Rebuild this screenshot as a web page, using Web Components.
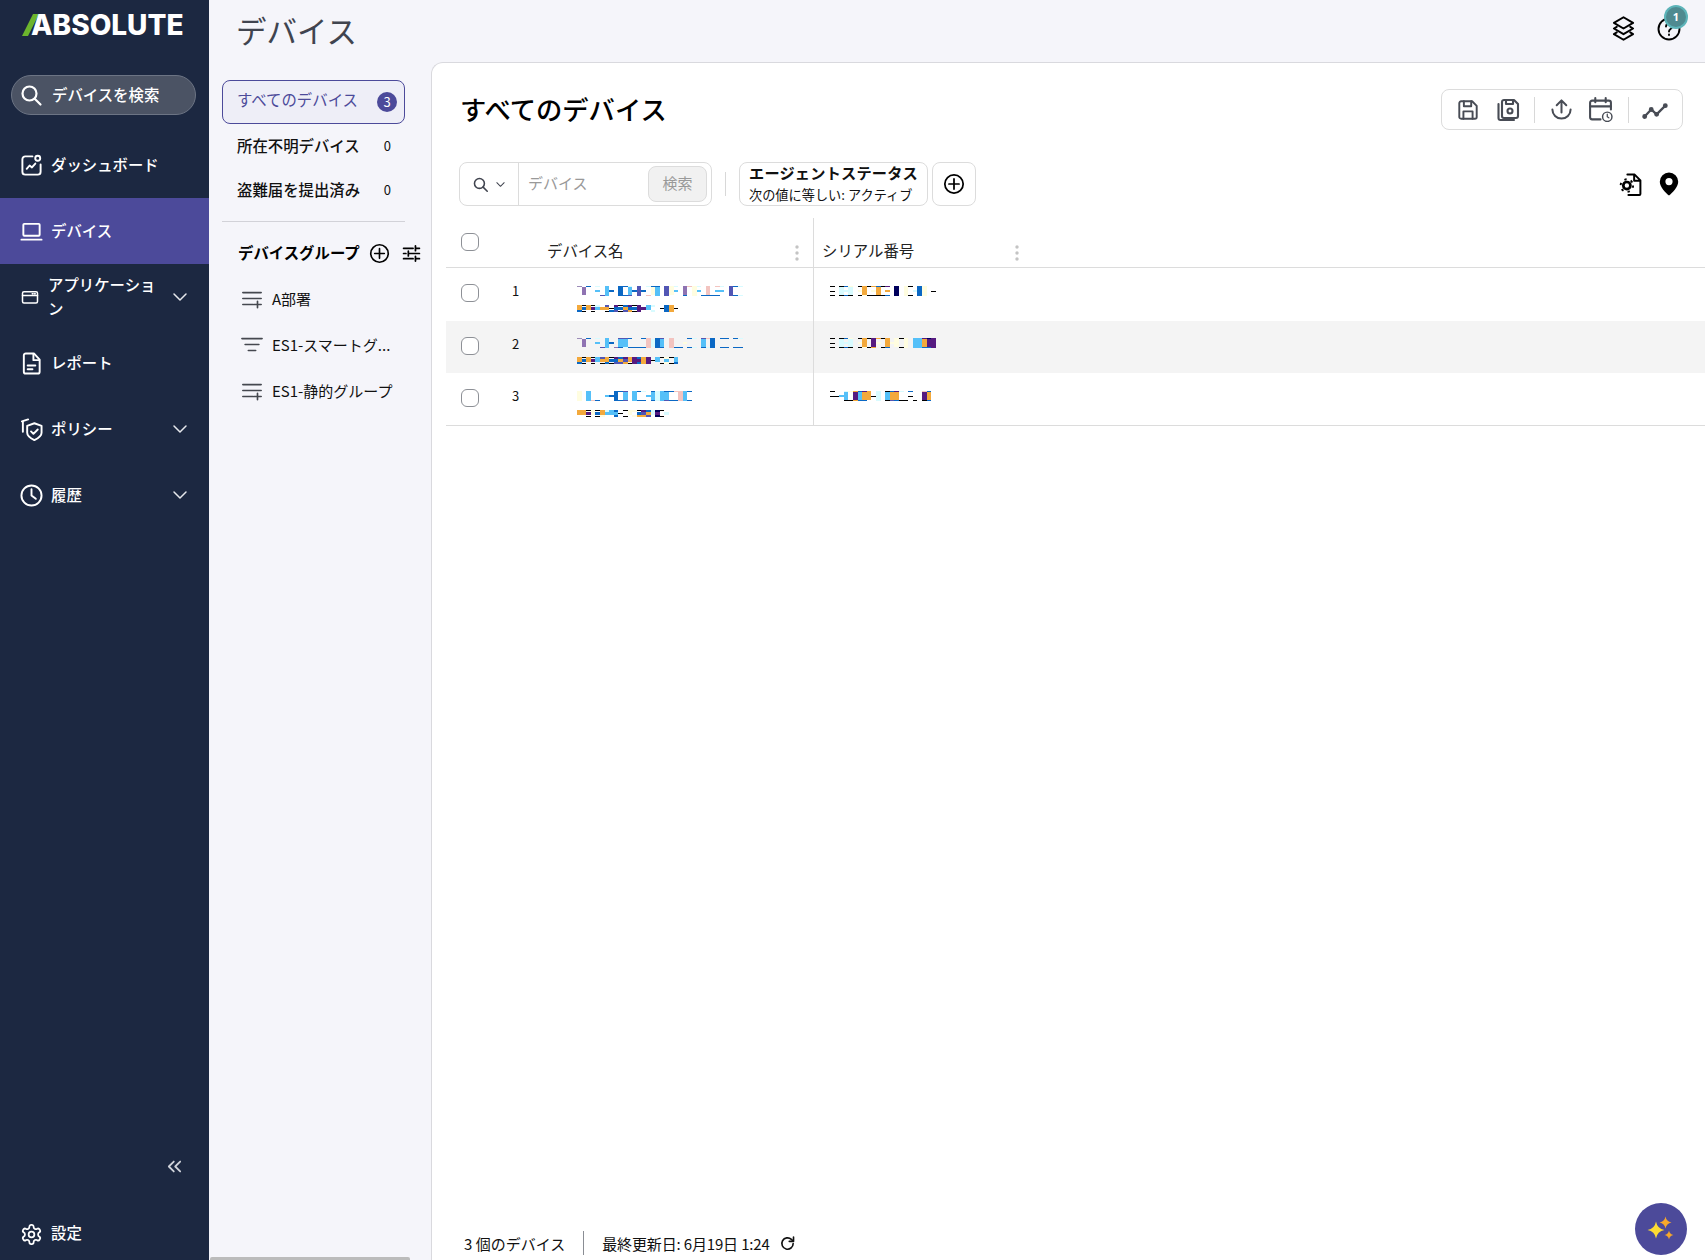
<!DOCTYPE html>
<html lang="ja">
<head>
<meta charset="utf-8">
<title>デバイス</title>
<style>
  html, body { margin: 0; height: 100%; overflow: hidden; }
  body { font-family: "Noto Sans CJK JP", "Noto Sans", sans-serif; font-size: 15px; color: #111; background: #f5f5fa; }
</style>
</head>
<body>
<abs-app></abs-app>

<script>
const star = (x, y, r) => `M${x} ${y - r}Q${x + r * .15} ${y - r * .15} ${x + r} ${y}Q${x + r * .15} ${y + r * .15} ${x} ${y + r}Q${x - r * .15} ${y + r * .15} ${x - r} ${y}Q${x - r * .15} ${y - r * .15} ${x} ${y - r}z`;

const icons = {
  search: '<circle cx="10.5" cy="10.5" r="7"/><path d="M15.7 15.7 21.5 21.5"/>',
  dashboard: '<path d="M13 2.5H5.5a3 3 0 0 0-3 3v13a3 3 0 0 0 3 3h13a3 3 0 0 0 3-3V11"/><circle cx="18.5" cy="4.5" r="2.6"/><path d="M7 15.5l3-3.5 2.5 2 3.5-4"/>',
  laptop: '<rect x="3.5" y="4" width="17" height="12.5" rx="1"/><path d="M1.5 20.5h21"/>',
  app: '<rect x="2" y="5" width="20" height="15" rx="2"/><path d="M2 10h20M15 7.5h1M18 7.5h1"/>',
  report: '<path d="M6 1.5h8.5l6 6.5v12.5a2 2 0 0 1-2 2H6a2 2 0 0 1-2-2v-17a2 2 0 0 1 2-2z"/><path d="M14 2v6.500h6M8 14h8M8 18h5"/>',
  policy: '<path d="M15 5.500l7.500 2.800v7c0 3-3 5.500-7.500 7.700-4.500-2.200-7.500-4.700-7.500-7.700v-7z"/><path d="M11.500 14l2.500 2.500 4.500-4.500"/><path d="M8.500 1.500 2 3.500l1 .8v10"/>',
  clock: '<circle cx="12" cy="12" r="10.500"/><path d="M12 5.500V12l4.500 3.500"/>',
  chevron: '<path d="M4 8l8 8 8-8"/>',
  collapse: '<path d="M11 5l-7 7 7 7M20 5l-7 7 7 7"/>',
  gear: '<path d="M12.220 2h-.44a2 2 0 0 0-2 2v.18a2 2 0 0 1-1 1.730l-.43.25a2 2 0 0 1-2 0l-.15-.08a2 2 0 0 0-2.730.73l-.22.38a2 2 0 0 0 .73 2.730l.15.1a2 2 0 0 1 1 1.720v.51a2 2 0 0 1-1 1.740l-.15.09a2 2 0 0 0-.73 2.730l.22.38a2 2 0 0 0 2.730.73l.15-.08a2 2 0 0 1 2 0l.43.25a2 2 0 0 1 1 1.730V20a2 2 0 0 0 2 2h.44a2 2 0 0 0 2-2v-.18a2 2 0 0 1 1-1.730l.43-.25a2 2 0 0 1 2 0l.15.08a2 2 0 0 0 2.730-.73l.22-.39a2 2 0 0 0-.73-2.730l-.15-.08a2 2 0 0 1-1-1.740v-.5a2 2 0 0 1 1-1.740l.15-.09a2 2 0 0 0 .73-2.730l-.22-.38a2 2 0 0 0-2.730-.73l-.15.08a2 2 0 0 1-2 0l-.43-.25a2 2 0 0 1-1-1.730V4a2 2 0 0 0-2-2z"/><circle cx="12" cy="12" r="3"/>',
  plus: '<circle cx="12" cy="12" r="10"/><path d="M12 6.500v11M6.500 12h11"/>',
  sliders: '<path d="M2 5.500h12M17 2.500v6M17 5.500h5M2 12h3M8 9v6M8 12h14M2 18.500h12M17 15.500v6M17 18.500h5"/>',
  groupAdd: '<path d="M2 5h20M2 11.500h20M2 18h11M14 18h8M18 14.500v7"/>',
  groupFilter: '<path d="M1 5h22M4.500 11.500h15M8 18h8"/>',
  layers: '<path d="M12 2l8.500 5L12 12 3.500 7z"/><path d="M6 10.500 3.500 12 12 17l8.500-5-2.500-1.500"/><path d="M6 15.500 3.500 17 12 22l8.500-5-2.500-1.500"/>',
  help: '<circle cx="12" cy="12" r="10.500"/><path d="M9 9.500a3 3 0 1 1 4.600 2.500c-1 .7-1.600 1.200-1.600 2.500"/><path d="M12 17.500v.5"/>',
  save: '<path d="M4.500 2.500h12l5 5v12a2 2 0 0 1-2 2h-15a2 2 0 0 1-2-2v-15a2 2 0 0 1 2-2z"/><path d="M7 21.500v-8h10v8M7.500 2.500v5.500h8V2.500"/>',
  saveStack: '<path d="M8 2h10l4 4v12a2 2 0 0 1-2 2H8a2 2 0 0 1-2-2V4a2 2 0 0 1 2-2z"/><path d="M10 2v4h7V2"/><circle cx="14" cy="13" r="2.500"/><path d="M2.500 6v14a2 2 0 0 0 2 2H18"/>',
  upload: '<path d="M12 15V2.500M7 7.500l5-5 5 5M2.500 12a9.500 9.500 0 0 0 19 0"/>',
  calClock: '<path d="M12 21.500H4a2 2 0 0 1-2-2v-14a2 2 0 0 1 2-2h16a2 2 0 0 1 2 2V12"/><path d="M2 9h20M7 1v4M17 1v4"/><circle cx="18.500" cy="19" r="4.500" fill="#fff" stroke-width="1.400"/><path d="M18.500 16.500V19l1.500 1" stroke-width="1.200"/>',
  trend: '<path d="M2 18.500l6.500-7 5 4.500 8.500-8.500"/><circle cx="2.500" cy="18" r="1.200" fill="currentColor"/><circle cx="8.500" cy="11.500" r="1.200" fill="currentColor"/><circle cx="13.500" cy="16" r="1.200" fill="currentColor"/><circle cx="21.500" cy="8" r="1.200" fill="currentColor"/>',
  docGear: '<path d="M9 2.500h7l5.500 5.500v13a1 1 0 0 1-1 1H10M15.500 3v5.500H21"/><circle cx="8.500" cy="13" r="3.400" stroke-width="2.600"/><circle cx="8.500" cy="13" r="6" stroke-linecap="butt" stroke-dasharray="2.200 4.080" stroke-width="1.800"/>',
  refresh: '<path d="M20 12a8 8 0 1 1-2.500-5.800L20 8.500"/><path d="M20.500 3v6h-6" fill="none"/>'
};

const icon = (name, size, sw = 1.8) => `<svg width="${size}" height="${size}" viewBox="0 0 24 24" fill="none" stroke="currentColor" stroke-width="${sw}" stroke-linecap="round" stroke-linejoin="round" aria-hidden="true">${icons[name]}</svg>`;

class AbsApp extends HTMLElement {
  connectedCallback() {
    this.attachShadow({ mode: 'open' });
    this.shadowRoot.innerHTML = `
      <style>
        :host { display: flex; height: 100vh; position: relative; overflow: hidden; }
        .right { flex: 1; min-width: 0; display: flex; flex-direction: column; }
        .body { flex: 1; min-height: 0; display: flex; }
      </style>
      <abs-sidenav></abs-sidenav>
      <div class="right">
        <abs-topbar></abs-topbar>
        <div class="body">
          <abs-subpanel></abs-subpanel>
          <abs-devices></abs-devices>
        </div>
      </div>
    `;
  }
}

class AbsSidenav extends HTMLElement {
  connectedCallback() {
    this.attachShadow({ mode: 'open' });
    this.shadowRoot.innerHTML = `
      <style>
        :host { display: flex; flex-direction: column; width: 209px; flex: none; background: #1c2841; color: #fff; font-weight: 500; font-size: 15.400px; }
        .logo { height: 75px; box-sizing: border-box; padding: 11px 0 0 22px; display: flex; align-items: flex-start; }
        .logo svg { margin-top: 3px; flex: none; }
        .logo span { font: 800 28px/28px Inter, "Noto Sans", sans-serif; margin-left: -8px; }
        .search { height: 40px; margin: 0 13px 0 11px; box-sizing: border-box; border-radius: 20px; background: #4b5364; border: 1px solid #6c7484; display: flex; align-items: center; padding-left: 7px; gap: 9px; }
        .search span { padding-bottom: 2px; }
        .spacer-a { height: 17px; }
        .grow { flex: 1; }
        .collapse { display: flex; justify-content: flex-end; padding-right: 26px; color: #d0d3da; margin-bottom: 33px; }
        .settings { height: 52px; display: flex; align-items: center; padding-left: 20px; gap: 8px; }
        .settings span { padding-bottom: 5px; }
        nav { display: flex; flex-direction: column; }
      </style>
      <div class="logo">
        <svg width="17" height="22" viewBox="0 0 17 22"><polygon points="11,0 17,0 6,22 0,22" fill="#6cb52d"/></svg>
        <span>ABSOLUTE</span>
      </div>
      <div class="search">${icon('search', 24, 2.2)}<span>デバイスを検索</span></div>
      <div class="spacer-a"></div>
      <nav>
        <abs-navitem icon="dashboard">ダッシュボード</abs-navitem>
        <abs-navitem icon="laptop" active>デバイス</abs-navitem>
        <abs-navitem icon="app" small more>アプリケーション</abs-navitem>
        <abs-navitem icon="report">レポート</abs-navitem>
        <abs-navitem icon="policy" more>ポリシー</abs-navitem>
        <abs-navitem icon="clock" more>履歴</abs-navitem>
      </nav>
      <div class="grow"></div>
      <div class="collapse">${icon('collapse', 17, 2.5)}</div>
      <div class="settings">${icon('gear', 23, 1.8)}<span>設定</span></div>
    `;
  }
}

class AbsNavitem extends HTMLElement {
  connectedCallback() {
    const small = this.hasAttribute('small');
    this.attachShadow({ mode: 'open' });
    this.shadowRoot.innerHTML = `
      <style>
        :host { display: flex; align-items: center; height: 66px; box-sizing: border-box; padding-left: 20px; padding-right: 20px; line-height: 24px; }
        :host([active]) { background: #4c4a9a; }
        :host([small]) svg.lead { margin-left: 1px; }
        .txt { flex: 1; min-width: 0; margin-left: ${small ? 9 : 8}px; padding-bottom: 3px; }
        .chev { display: flex; color: #e6e8ec; margin-left: 6px; }
      </style>
      ${icon(this.getAttribute('icon'), small ? 18 : 23, 2).replace('<svg', '<svg class="lead"')}
      <span class="txt"><slot></slot></span>
      ${this.hasAttribute('more') ? `<span class="chev">${icon('chevron', 18, 2)}</span>` : ''}
    `;
  }
}

class AbsTopbar extends HTMLElement {
  connectedCallback() {
    this.attachShadow({ mode: 'open' });
    this.shadowRoot.innerHTML = `
      <style>
        :host { display: flex; align-items: center; height: 62px; flex: none; box-sizing: border-box; padding: 0 24px 0 27px; color: #000; }
        h1 { margin: 0 0 2px; font-size: 30.500px; font-weight: 400; color: #40444f; flex: 1; line-height: 44px; }
        .help { position: relative; display: flex; margin-left: 20px; margin-bottom: 4px; }
        .layers { display: flex; margin-bottom: 6px; }
        .badge { position: absolute; left: 9px; top: -10px; width: 20px; height: 20px; border-radius: 50%; background: #4f8a90; box-shadow: 0 0 0 2px #5db4b9; color: #fff; font: 700 11px/20px "Noto Sans", sans-serif; text-align: center; }
      </style>
      <h1>デバイス</h1>
      <span class="layers">${icon('layers', 27, 1.8)}</span>
      <span class="help">${icon('help', 24, 1.9)}<span class="badge">1</span></span>
    `;
  }
}

class AbsSubpanel extends HTMLElement {
  connectedCallback() {
    this.attachShadow({ mode: 'open' });
    this.shadowRoot.innerHTML = `
      <style>
        :host { display: block; width: 222px; flex: none; box-sizing: border-box; padding: 18px 0 0 13px; position: relative; font-weight: 500; font-size: 15.400px; }
        .item { width: 183px; height: 44px; box-sizing: border-box; display: flex; align-items: center; justify-content: space-between; padding: 0 14px 0 15px; color: #111; }
        .item .lbl { padding-bottom: 3px; }
        .sel { border: 1px solid #4c4a9a; border-radius: 8px; background: #eeeef7; color: #4c4a9a; padding: 0 7px 0 14px; font-weight: 400; }
        .sel .lbl { padding-bottom: 6px; }
        .badge { width: 20px; height: 20px; border-radius: 50%; background: #4c4a9a; color: #fff; font-size: 13px; line-height: 20px; text-align: center; }
        .count { font-size: 13px; font-weight: 400; padding-bottom: 1px; }
        hr { width: 183px; height: 1px; border: 0; background: #d2d2d8; margin: 9px 0 10px; }
        .head { height: 44px; box-sizing: border-box; padding: 0 0 2px 16px; display: flex; align-items: center; font-weight: 700; color: #000; }
        .head .txt { width: 131px; flex: none; padding-bottom: 3px; white-space: nowrap; }
        .head svg { margin-right: 12px; flex: none; }
        .group { display: flex; align-items: center; height: 46px; padding-left: 19px; gap: 9px; color: #111; font-weight: 400; font-size: 15px; }
        .group svg { flex: none; color: #45484f; }
        .group span { white-space: nowrap; padding-bottom: 2px; }
        .scroll { position: absolute; left: 1px; bottom: 0; width: 200px; height: 3px; background: #bbb; border-radius: 2px 2px 0 0; }
      </style>
      <div class="item sel"><span class="lbl">すべてのデバイス</span><span class="badge">3</span></div>
      <div class="item"><span class="lbl">所在不明デバイス</span><span class="count">0</span></div>
      <div class="item"><span class="lbl">盗難届を提出済み</span><span class="count">0</span></div>
      <hr>
      <div class="head"><span class="txt">デバイスグループ</span>${icon('plus', 21, 1.9)}${icon('sliders', 19, 2.2)}</div>
      <div class="groups">
        <div class="group">${icon('groupAdd', 22, 1.8)}<span>A部署</span></div>
        <div class="group">${icon('groupFilter', 22, 1.8)}<span>ES1-スマートグ...</span></div>
        <div class="group">${icon('groupAdd', 22, 1.8)}<span>ES1-静的グループ</span></div>
      </div>
      <div class="scroll"></div>
    `;
  }
}

class AbsDevices extends HTMLElement {
  connectedCallback() {
    this.attachShadow({ mode: 'open' });
    this.shadowRoot.innerHTML = `
      <style>
        :host { flex: 1; min-width: 0; display: flex; flex-direction: column; background: #fff; border: 1px solid #d9d9de; border-width: 1px 0 0 1px; border-top-left-radius: 12px; position: relative; }
        .top { display: flex; align-items: center; justify-content: space-between; height: 41px; margin: 26px 22px 0 28px; }
        h2 { margin: 0 0 2px; font-size: 26.300px; font-weight: 500; color: #000; }
        .tools { display: flex; align-items: center; height: 41px; box-sizing: border-box; border: 1px solid #dcdcdc; border-radius: 8px; padding: 0 14px 0 15px; color: #484c55; }
        .tools svg { display: block; }
        .tools .sep { width: 1px; height: 26px; background: #d8d8d8; }
        .filters { display: flex; align-items: stretch; height: 44px; margin: 32px 24px 0 27px; }
        .box { border: 1px solid #dcdcdc; border-radius: 8px; box-sizing: border-box; }
        .find { display: flex; width: 253px; align-items: center; }
        .find .kind { width: 59px; align-self: stretch; border-right: 1px solid #dcdcdc; box-sizing: border-box; display: flex; align-items: center; justify-content: center; gap: 6px; color: #40444f; }
        .find .ph { flex: 1; padding: 0 0 3px 9px; color: #999; }
        .find .btn { width: 59px; height: 36px; box-sizing: border-box; margin-right: 4px; border: 1px solid #dcdcdc; border-radius: 8px; background: #f1f1f1; color: #999; text-align: center; line-height: 31px; }
        .vsep { width: 1px; height: 24px; background: #d8d8d8; margin: 10px 13px 0 13px; }
        .chip { width: 189px; padding: 0 0 0 9px; }
        .chip b { display: block; font-size: 15.200px; line-height: 20px; margin-top: -1px; letter-spacing: .2px; }
        .chip span { display: block; font-size: 13.200px; line-height: 20px; margin-top: 3px; }
        .add { width: 44px; margin-left: 4px; display: flex; align-items: center; justify-content: center; color: #000; }
        .right { margin-left: auto; display: flex; align-items: center; gap: 14px; color: #000; }
        .table { margin: 12px 0 0 14px; }
        .footer { margin-top: auto; display: flex; align-items: center; height: 34px; margin-bottom: 0; padding: 0 0 0 32px; color: #111; }
        .footer .sep { width: 1px; height: 24px; background: #8a8d94; margin: 0 18px 0 18px; }
        .footer .date { letter-spacing: -.15px; }
        .footer svg { margin-left: 9px; color: #111; }
        .fab { position: absolute; right: 18px; bottom: 5px; width: 52px; height: 52px; border-radius: 50%; background: #4c4a9a; display: flex; align-items: center; justify-content: center; }
      </style>
      <div class="top">
        <h2>すべてのデバイス</h2>
        <div class="tools">
          ${icon('save', 22, 2.1)}<span style="width:17px"></span>
          ${icon('saveStack', 24, 2.1)}<span style="width:14px"></span>
          <span class="sep"></span><span style="width:15px"></span>
          ${icon('upload', 23, 2.1)}<span style="width:15px"></span>
          ${icon('calClock', 25, 2)}<span style="width:15px"></span>
          <span class="sep"></span><span style="width:13px"></span>
          ${icon('trend', 26, 2.1)}
        </div>
      </div>
      <div class="filters">
        <div class="box find">
          <div class="kind">${icon('search', 17, 2.2)}${icon('chevron', 11, 2.2)}</div>
          <div class="ph">デバイス</div>
          <div class="btn">検索</div>
        </div>
        <div class="vsep"></div>
        <div class="box chip"><b>エージェントステータス</b><span>次の値に等しい: アクティブ</span></div>
        <div class="box add">${icon('plus', 22, 1.9)}</div>
        <div class="right">
          ${icon('docGear', 25, 1.9)}
          <svg width="24" height="24" viewBox="0 0 24 24" aria-hidden="true"><path fill="#000" fill-rule="evenodd" d="M12 0.500a9.200 9.200 0 0 0-9.200 9.200c0 5.600 6 11 9.200 13.800 3.200-2.800 9.200-8.200 9.200-13.800A9.200 9.200 0 0 0 12 .500zm0 5.500a3.600 3.600 0 1 1 0 7.200 3.600 3.600 0 0 1 0-7.200z"/></svg>
        </div>
      </div>
      <div class="table">
        <abs-tablehead></abs-tablehead>
        <abs-row no="1" name="g.. .P. b.. ... cl. ..d lLl .b. ... bBb b.b cLd .b. dDd .b. c.r bY. bLl ... dDd yY. cl. ... pPb r.. yYy cl. ..b rRb ..b rlb cl. ... dDd b.b c.c"
          sub="oOb kbk oO. kmk cl. .o. dOk .kb mbd kBk bod mbo kBk mMm .m. lL. c.c ... .k. bBb oOo .k."
          serial="kkk ... kCk bcb yCk ... kyk oOy k.k oyk bOk k.k mob ... nNn ... yYy k.k .c. bBb yYy ... .k."></abs-row>
        <abs-row shade no="2" name="g.. .P. b.. ... cl. ..d lLl .b. ..p dLb dLc b.b ..b ..b b.b rRr .C. bBb dLb ... rRr ..b ..b .y. b.b c.c ... dLb r.c bBb ... b.b b.b ... b.b c.b"
          sub="oOb kbk oO. kmk lL. dok oOb kbk mbd bod mdo oOk mmm bMb oOo mMm .k. lL. k.k yLy k.k lLb"
          serial="kkk ... kCk bcb yCk ... kyk oOy k.k mMo oy. k.k oOb .y. yY. k.k yYy ... lLl lLl mOb nMb mMm"></abs-row>
        <abs-row no="3" name="yYy ... lLl ..r ..b ... .l. .b. bBb b.b dLd ... lLl b.b c.b .l. bLb cCc lLl bLd b.b r.b rRr lLl b.b"
          sub="oO. oO. kmk yY. kbk oOy cl. lL. bLb .k. k.k yY. y.y kbo mdo bod cc. nMn k.k .c."
          serial="kk. .k. .l. cLk y.k oMo bLb mOb oO. .k. cCc ... kLk bOd mOb c.k ..k bk. ..k ... rMk bOb ..."></abs-row>
      </div>
      <div class="footer">
        <span>3 個のデバイス</span><span class="sep"></span><span class="date">最終更新日: 6月19日 1:24</span>${icon('refresh', 17, 2.3)}
      </div>
      <div class="fab">
        <svg width="32" height="32" viewBox="0 0 32 32" aria-hidden="true">
          <path fill="#fddb33" d="${star(11, 17, 8.500)}"/>
          <path fill="#f7a82b" d="${star(20.500, 9.500, 6)}"/>
          <path fill="#f7a82b" d="${star(24, 22, 4.500)}"/>
        </svg>
      </div>
    `;
  }
}

class AbsTablehead extends HTMLElement {
  connectedCallback() {
    this.attachShadow({ mode: 'open' });
    const dots = '<svg width="4" height="16" viewBox="0 0 4 16" aria-hidden="true"><circle cx="2" cy="2" r="1.700" fill="#c4c4c4"/><circle cx="2" cy="8" r="1.700" fill="#c4c4c4"/><circle cx="2" cy="14" r="1.700" fill="#c4c4c4"/></svg>';
    this.shadowRoot.innerHTML = `
      <style>
        :host { display: grid; grid-template-columns: 101px 266px 1fr; height: 49px; border-bottom: 1px solid #dcdcdc; color: #222; font-size: 15.400px; }
        .chk { padding: 15px 0 0 15px; }
        .name { display: flex; justify-content: space-between; padding: 22px 14px 0 0; line-height: 20px; }
        .name svg { margin-top: 5px; }
        .serial { border-left: 1px solid #dcdcdc; padding: 22px 0 0 8px; line-height: 20px; }
        .serial div { width: 197px; display: flex; justify-content: space-between; }
        .serial svg { margin-top: 5px; }
      </style>
      <div class="chk"><abs-check></abs-check></div>
      <div class="name"><span>デバイス名</span>${dots}</div>
      <div class="serial"><div><span>シリアル番号</span>${dots}</div></div>
    `;
  }
}

class AbsRow extends HTMLElement {
  connectedCallback() {
    this.attachShadow({ mode: 'open' });
    this.shadowRoot.innerHTML = `
      <style>
        :host { display: grid; grid-template-columns: 58px 43px 266px 1fr; height: 52px; color: #111; }
        :host(:nth-child(2)) { height: 53px; }
        :host([shade]) { background: #f4f4f4; }
        :host(:last-child) { border-bottom: 1px solid #dcdcdc; }
        .chk { padding: 16px 0 0 15px; }
        .no { padding-top: 13px; font-size: 13px; line-height: 20px; margin-left: 8px; }
        .name { padding: 18px 0 0 30px; display: flex; flex-direction: column; gap: 9px; align-items: flex-start; }
        .serial { border-left: 1px solid #dcdcdc; padding: 18px 0 0 16px; }
        :host([shade]) .name, :host([shade]) .serial { padding-top: 17px; }
      </style>
      <div class="chk"><abs-check></abs-check></div>
      <div class="no">${this.getAttribute('no')}</div>
      <div class="name">
        <abs-pixels cols="${this.getAttribute('name')}"></abs-pixels>
        <abs-pixels small cols="${this.getAttribute('sub')}"></abs-pixels>
      </div>
      <div class="serial"><abs-pixels cols="${this.getAttribute('serial')}"></abs-pixels></div>
    `;
  }
}

class AbsCheck extends HTMLElement {
  connectedCallback() {
    this.attachShadow({ mode: 'open' });
    this.shadowRoot.innerHTML = `
      <style>
        :host { display: block; width: 18px; height: 18px; box-sizing: border-box; border: 1.500px solid #8d9096; border-radius: 6px; background: #fff; }
      </style>
    `;
  }
}

// the blurred-out device names and serials. one column = top/middle/bottom colour,
// an upper case middle fills the column, a lower case one is only a dash
const mosaicColours = { g: '#9c8cb8', p: '#8f73b2', b: '#0b68c4', l: '#55c0f8', d: '#5256b4', c: '#d8fbff', y: '#fffde0', r: '#f3c4c0', o: '#f3a93c', k: '#000', m: '#561a80', n: '#00005c' };
const CELL = 4.6;

class AbsPixels extends HTMLElement {
  connectedCallback() {
    const small = this.hasAttribute('small');
    const bands = small ? [2, 3, 2] : [1, 8, 1];
    const total = bands[0] + bands[1] + bands[2];
    const cols = this.getAttribute('cols').trim().split(/\s+/);
    let rects = '';
    const rect = (i, y, h, ch) => {
      const fill = mosaicColours[ch.toLowerCase()];
      if (fill) rects += `<rect x="${i * CELL}" y="${y}" width="${CELL}" height="${ch === 'k' ? 1 : h}" fill="${fill}"/>`;
    };
    cols.forEach((col, i) => {
      rect(i, 0, bands[0], col[0]);
      if (small || col[1] !== col[1].toLowerCase()) rect(i, bands[0] + (small && col[1] === 'k' ? 1 : 0), bands[1], col[1]);
      else rect(i, col[1] === 'k' ? 4.5 : 4, 2, col[1]);
      rect(i, bands[0] + bands[1] + (small && col[2] === 'k' ? 1 : 0), bands[2], col[2]);
    });
    this.attachShadow({ mode: 'open' });
    this.shadowRoot.innerHTML = `
      <style>:host { display: block; line-height: 0; }</style>
      <svg width="${Math.ceil(cols.length * CELL)}" height="${total}" shape-rendering="crispEdges" aria-hidden="true">${rects}</svg>
    `;
  }
}

customElements.define('abs-check', AbsCheck);
customElements.define('abs-pixels', AbsPixels);
customElements.define('abs-row', AbsRow);
customElements.define('abs-tablehead', AbsTablehead);
customElements.define('abs-navitem', AbsNavitem);
customElements.define('abs-sidenav', AbsSidenav);
customElements.define('abs-topbar', AbsTopbar);
customElements.define('abs-subpanel', AbsSubpanel);
customElements.define('abs-devices', AbsDevices);
customElements.define('abs-app', AbsApp);
</script>
</body>
</html>
